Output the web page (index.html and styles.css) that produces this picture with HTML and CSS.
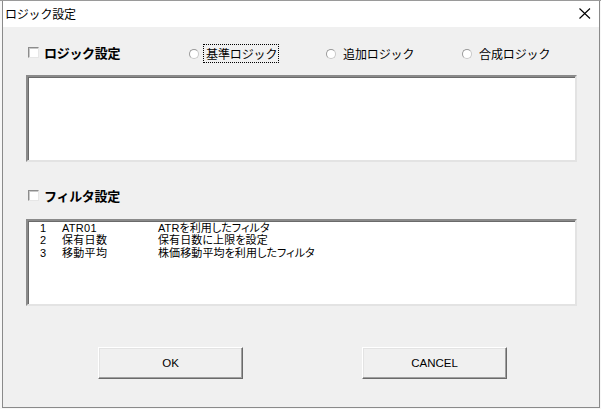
FILE: index.html
```html
<!DOCTYPE html>
<html lang="ja">
<head>
<meta charset="utf-8">
<title>ロジック設定</title>
<link rel="stylesheet" href="styles.css">
</head>
<body>
<div class="dialog">
  <div class="titlebar">
    <span class="title">ロジック設定</span>
    <svg class="close" width="12" height="11" viewBox="0 0 12 11" aria-hidden="true">
      <path d="M0.5 0.5 L11 10.5 M11 0.5 L0.5 10.5" stroke="#000" stroke-width="1.1" fill="none"/>
    </svg>
  </div>
  <div class="content">
    <div class="row row-logic">
      <label class="check"><span class="box"></span><span class="check-text">ロジック設定</span></label>
      <label class="radio"><span class="dot"></span><span class="radio-text focus">基準ロジック</span></label>
      <label class="radio"><span class="dot"></span><span class="radio-text">追加ロジック</span></label>
      <label class="radio"><span class="dot"></span><span class="radio-text">合成ロジック</span></label>
    </div>
    <div class="field field-logic"></div>
    <div class="row row-filter">
      <label class="check"><span class="box"></span><span class="check-text">フィルタ設定</span></label>
    </div>
    <div class="field field-list">
      <div class="item"><span class="num">1</span><span class="name">ATR01</span><span class="desc">ATRを利用したフィルタ</span></div>
      <div class="item"><span class="num">2</span><span class="name">保有日数</span><span class="desc">保有日数に上限を設定</span></div>
      <div class="item"><span class="num">3</span><span class="name">移動平均</span><span class="desc">株価移動平均を利用したフィルタ</span></div>
    </div>
    <div class="buttons">
      <button class="btn btn-ok">OK</button>
      <button class="btn btn-cancel">CANCEL</button>
    </div>
  </div>
</div>
</body>
</html>
```
FILE: styles.css
```css
html {
  background: #ffffff;
}
body {
  margin: 0;
  width: 601px;
  height: 409px;
  overflow: hidden;
  background: #f7f7f7;
  border-top: 1px solid #9a9a9a;
  box-sizing: border-box;
  font-family: "Noto Sans CJK JP", "Noto Sans", sans-serif;
  color: #000;
}
.dialog {
  margin-left: 2px;
  width: 598px;
  height: 407px;
  box-sizing: border-box;
  border: 1px solid #8a8a8a;
  border-top: none;
  background: #f0f0f0;
  display: flex;
  flex-direction: column;
}
.titlebar {
  height: 26px;
  background: #ffffff;
  display: flex;
  align-items: center;
  justify-content: space-between;
  padding: 0 8px 0 2px;
  flex-shrink: 0;
}
.title {
  font-size: 12px;
  line-height: 14px;
  letter-spacing: -0.2px;
  margin-top: -1px;
}
.close {
  display: block;
  margin-top: -1px;
}
.content {
  padding: 16px 0 0 23px;
  display: flex;
  flex-direction: column;
}
.row {
  height: 20px;
  display: flex;
  align-items: center;
}
.row-logic {
  display: grid;
  grid-template-columns: 162px 137px 136px auto;
  align-items: center;
}
.check {
  display: flex;
  align-items: center;
  margin-left: 2px;
}
.box {
  width: 9px;
  height: 9px;
  background: #ffffff;
  border: 1px solid;
  border-color: #8c8c8c #e6e6e6 #e6e6e6 #8c8c8c;
  box-shadow: inset 1px 1px 0 #c8c8c8;
  margin-top: -2px;
}
.check-text {
  font-size: 13px;
  font-weight: bold;
  line-height: 16px;
  margin-left: 5px;
  letter-spacing: -0.3px;
}
.radio {
  display: flex;
  align-items: center;
}
.dot {
  width: 8px;
  height: 8px;
  border-radius: 50%;
  background: #ffffff;
  border: 1px solid #c8c8c8;
  border-top-color: #999999;
  border-left-color: #999999;
  margin-left: 1px;
  margin-top: 1px;
}
.radio-text {
  font-size: 12px;
  line-height: 15px;
  margin-left: 4px;
  padding: 1px 1px 1px 2px;
  border: 1px dotted transparent;
  letter-spacing: -0.1px;
}
.radio-text.focus {
  border-color: #000;
}
.field {
  width: 551px;
  height: 87px;
  box-sizing: border-box;
  background: #ffffff;
  border: 2px solid;
  border-color: #8a8a8a #e3e3e3 #e3e3e3 #8a8a8a;
  box-shadow: inset 1px 1px 0 #6a6a6a;
}
.field-logic {
  margin-top: 12px;
}
.row-filter {
  margin-top: 24px;
}
.field-list {
  margin-top: 13px;
  padding: 1px 0 0 12px;
}
.item {
  display: grid;
  grid-template-columns: 22px 96px auto;
  font-family: "Liberation Sans", "Noto Sans CJK JP", sans-serif;
  font-size: 11px;
  line-height: 12.3px;
  height: 12.3px;
  white-space: nowrap;
  font-feature-settings: "palt";
}
.name {
  letter-spacing: 0.3px;
}
.desc {
  letter-spacing: 0.1px;
}
.buttons {
  display: flex;
  margin-top: 41px;
  margin-left: 72px;
  gap: 119px;
}
.btn {
  width: 145px;
  height: 32px;
  box-sizing: border-box;
  background: #f0f0f0;
  border: 1px solid;
  border-color: #ffffff #6a6a6a #6a6a6a #ffffff;
  box-shadow: inset -1px -1px 0 #a0a0a0, inset 1px 1px 0 #e3e3e3;
  font-family: "Liberation Sans", "Noto Sans", sans-serif;
  font-size: 11.5px;
  color: #000;
  padding: 0;
  line-height: 14px;
}
```
